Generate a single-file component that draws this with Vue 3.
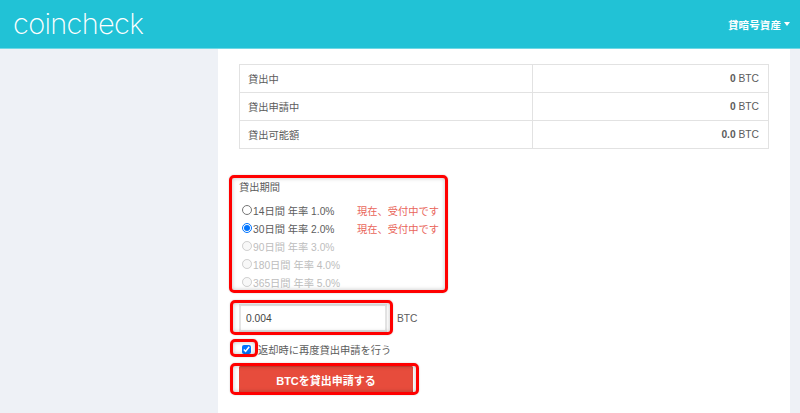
<script setup>
const rows = [
  { label: '貸出中', num: '0' },
  { label: '貸出申請中', num: '0' },
  { label: '貸出可能額', num: '0.0' },
]
const terms = [
  { id: 't14', label: '14日間 年率 1.0%', open: true },
  { id: 't30', label: '30日間 年率 2.0%', open: true, checked: true },
  { id: 't90', label: '90日間 年率 3.0%' },
  { id: 't180', label: '180日間 年率 4.0%' },
  { id: 't365', label: '365日間 年率 5.0%' },
]
</script>

<template>
  <div class="page">
    <header class="topbar">
      <span class="logo">coincheck</span>
      <span class="menu">貸暗号資産<i class="caret"></i></span>
    </header>
    <div class="body">
      <aside class="side"></aside>
      <main class="main">
        <table class="stats">
          <tbody>
            <tr v-for="r in rows" :key="r.label">
              <td class="c1">{{ r.label }}</td>
              <td class="c2"><b>{{ r.num }}</b> BTC</td>
            </tr>
          </tbody>
        </table>

        <form class="form" @submit.prevent>
          <div class="term-block mark-wrap">
            <div class="term-title">貸出期間</div>
            <label v-for="t in terms" :key="t.id" class="term" :class="{ off: !t.open }">
              <input type="radio" name="term" class="radio" :checked="t.checked" :disabled="!t.open" />
              <span class="term-label">{{ t.label }}</span>
              <span v-if="t.open" class="status">現在、受付中です</span>
            </label>
            <span class="mark mark-a"></span>
          </div>

          <div class="amount mark-wrap">
            <input class="amount-input" type="text" value="0.004" />
            <span class="unit">BTC</span>
            <span class="mark mark-b"></span>
          </div>

          <label class="again mark-wrap">
            <input type="checkbox" class="check" checked />
            <span>返却時に再度貸出申請を行う</span>
            <span class="mark mark-c"></span>
          </label>

          <div class="mark-wrap submit-wrap">
            <button class="submit" type="submit">BTCを貸出申請する</button>
            <span class="mark mark-d"></span>
          </div>
        </form>
      </main>
    </div>
  </div>
</template>

<style>
html, body { margin: 0; background: #eef1f6; }
</style>

<style scoped>
.page {
  width: 800px;
  height: 413px;
  overflow: hidden;
  font-family: "Liberation Sans", "Noto Sans CJK JP", sans-serif;
  color: #5c5c5c;
  background: #eef1f6;
}
.topbar {
  height: 48px;
  background: #21c2d6;
  border-bottom: 1px solid #6fd8e5;
  display: flex;
  align-items: center;
  justify-content: space-between;
  padding: 0 10px 0 13px;
}
.logo {
  font-family: Inter, Lato, sans-serif;
  font-weight: 200;
  font-size: 29px;
  color: #fff;
  letter-spacing: -0.7px;
  margin-bottom: 2px;
}
.menu {
  font-size: 10.5px;
  font-weight: 700;
  color: #fff;
  display: flex;
  align-items: center;
  letter-spacing: 0.1px;
}
.caret {
  margin-left: 3px;
  border-left: 3.5px solid transparent;
  border-right: 3.5px solid transparent;
  border-top: 4px solid #fff;
}
.body { display: flex; height: 364px; }
.side { width: 218px; flex: none; }
.main {
  width: 572px;
  background: #fff;
  padding: 15px 21px 0;
  box-sizing: border-box;
}
.stats {
  width: 530px;
  border-collapse: collapse;
  font-size: 10.25px;
  table-layout: fixed;
}
.stats td {
  border: 1px solid #e2e2e2;
  padding: 0 9px 0 8px;
  box-sizing: border-box;
}
.stats tr { height: 28px; }
.c1 { width: 293px; }
.c2 { text-align: right; }
.form { margin-top: 31px; font-size: 10.25px; }
.mark-wrap { position: relative; }
.mark {
  position: absolute;
  border: 3px solid #f00;
  border-radius: 5px;
  box-sizing: border-box;
  pointer-events: none;
  box-shadow: inset 0 0 4px rgba(0, 0, 0, 0.25), 0 0 2px rgba(0, 0, 0, 0.2);
}
.term-block { height: 111px; }
.term-title { line-height: 16px; margin-bottom: 5px; }
.term {
  display: flex;
  align-items: center;
  height: 18px;
}
.term.off { color: #bdbdbd; }
.radio {
  width: 10px;
  height: 10px;
  margin: 0 1px 0 3px;
  flex: none;
}
.term-label { width: 104px; flex: none; }
.status { color: #e9655a; white-space: nowrap; }
.mark-a { left: -10px; top: -5px; width: 219px; height: 118px; }
.amount {
  display: flex;
  align-items: center;
  margin-top: 13px;
  height: 28px;
}
.amount-input {
  width: 148px;
  height: 28px;
  box-sizing: border-box;
  border: 2px solid #e4e4e4;
  padding: 0 5px;
  font: 10.25px "Liberation Sans", sans-serif;
  color: #444;
  outline: none;
}
.unit { margin-left: 10px; }
.mark-b { left: -9px; top: -4px; width: 163px; height: 35px; }
.again {
  display: flex;
  align-items: center;
  margin-top: 8px;
  height: 18px;
}
.check { width: 9px; height: 9px; margin: 0 7px 0 3px; flex: none; }
.mark-c { left: -9px; top: -1px; width: 28px; height: 18px; }
.submit-wrap { margin-top: 8px; width: 174px; }
.submit {
  display: block;
  width: 174px;
  height: 28px;
  border: 0;
  border-radius: 2px;
  background: #e74c3c;
  box-shadow: inset 0 -2px 0 #c9402f, inset 0 1px 0 #cf4536;
  color: #fff;
  font: 700 11px "Liberation Sans", "Noto Sans CJK JP", sans-serif;
}
.mark-d { left: -9px; top: -3px; width: 189px; height: 32px; }
</style>
